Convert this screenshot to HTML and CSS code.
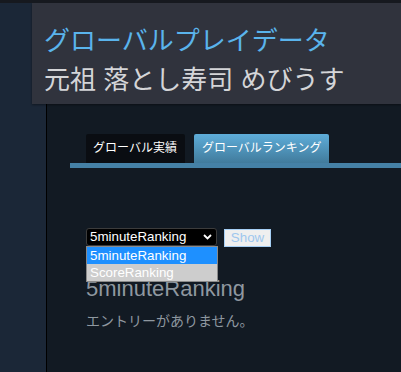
FILE: index.html
```html
<!DOCTYPE html>
<html lang="ja">
<head>
<meta charset="utf-8">
<title>グローバルプレイデータ</title>
<link rel="stylesheet" href="styles.css">
</head>
<body>
<div class="page">
  <aside class="sidebar"></aside>
  <main class="main">
    <header class="header">
      <div class="title">グローバルプレイデータ</div>
      <div class="game">元祖 落とし寿司 めびうす</div>
    </header>
    <section class="content">
      <nav class="tabs">
        <div class="tab">グローバル実績</div>
        <div class="tab active">グローバルランキング</div>
      </nav>
      <div class="body">
        <div class="controls">
          <div class="select">
            <span class="select-text">5minuteRanking</span>
            <svg class="chev" width="9" height="6" viewBox="0 0 9 6"><path d="M1 1 L4.5 4.5 L8 1" fill="none" stroke="#fff" stroke-width="1.8"/></svg>
          </div>
          <button class="show" disabled>Show</button>
          <div class="listbox">
            <div class="opt selected">5minuteRanking</div>
            <div class="opt">ScoreRanking</div>
          </div>
        </div>
        <h2 class="rank-title">5minuteRanking</h2>
        <p class="empty">エントリーがありません。</p>
      </div>
    </section>
  </main>
</div>
</body>
</html>
```
FILE: styles.css
```css
html, body {
  margin: 0;
  padding: 0;
}
body {
  background: #121a23;
  border-top: 3px solid #16191f;
  font-family: "Liberation Sans", "Noto Sans CJK JP", sans-serif;
  overflow: hidden;
}
.page {
  display: flex;
  min-height: 369px;
}
.sidebar {
  width: 46px;
  flex: none;
  background: #1b2737;
  border-right: 1px solid #000;
}
.main {
  flex: 1;
  min-width: 0;
}
.header {
  margin-left: -15px;
  background: #30333d;
  padding: 19px 12px 4px;
  box-shadow: 0 1px 2px rgba(0,0,0,0.4);
  position: relative;
}
.title, .game {
  font-size: 26px;
  line-height: 39px;
  white-space: nowrap;
}
.title { color: #5ab4ec; }
.game { color: #d4d5d8; }
.content {
  padding: 30px 0 0 23px;
}
.tabs {
  display: flex;
  gap: 9px;
  padding-left: 16px;
  border-bottom: 5px solid #4581a6;
}
.tab {
  height: 29px;
  line-height: 29px;
  padding: 0 8px 0 7px;
  font-size: 12px;
  color: #fff;
  background: #0a0d12;
  border-radius: 2px 2px 0 0;
  white-space: nowrap;
}
.tab.active {
  background: linear-gradient(#5eadd9, #417b9c);
  padding: 0 8px;
}
.body {
  padding-left: 16px;
}
.controls {
  position: relative;
  margin-top: 60px;
  display: flex;
  gap: 7px;
  align-items: flex-start;
}
.select {
  box-sizing: border-box;
  width: 131px;
  height: 18px;
  background: #000;
  border: 1px solid #3c3c3c;
  border-radius: 3px;
  display: flex;
  align-items: center;
  justify-content: space-between;
  padding: 0 4px 0 3px;
  color: #fff;
  font-size: 13.333px;
}
.select-text { line-height: 16px; }
.chev { display: block; }
.show {
  box-sizing: border-box;
  margin: 1px 0 0;
  height: 18px;
  width: 47px;
  padding: 0;
  background: #efefef;
  border: 1px solid #a6cff5;
  color: #9ec7ee;
  font-family: "Liberation Sans", sans-serif;
  font-size: 13.333px;
  line-height: 16px;
}
.listbox {
  position: absolute;
  left: 0;
  top: 18px;
  box-sizing: border-box;
  width: 132px;
  border: 1px solid #8a8a8a;
  background: #cdcdcd;
  z-index: 2;
}
.opt {
  height: 17px;
  line-height: 17px;
  padding-left: 3px;
  color: #fff;
  font-size: 13.333px;
}
.opt.selected { background: #1e90ff; }
.rank-title {
  margin: 29px 0 0;
  font-size: 22px;
  font-weight: normal;
  line-height: 25px;
  color: #8f98a0;
}
.empty {
  margin: 10px 0 0;
  font-size: 14px;
  line-height: 20px;
  color: #8f98a0;
}
```
